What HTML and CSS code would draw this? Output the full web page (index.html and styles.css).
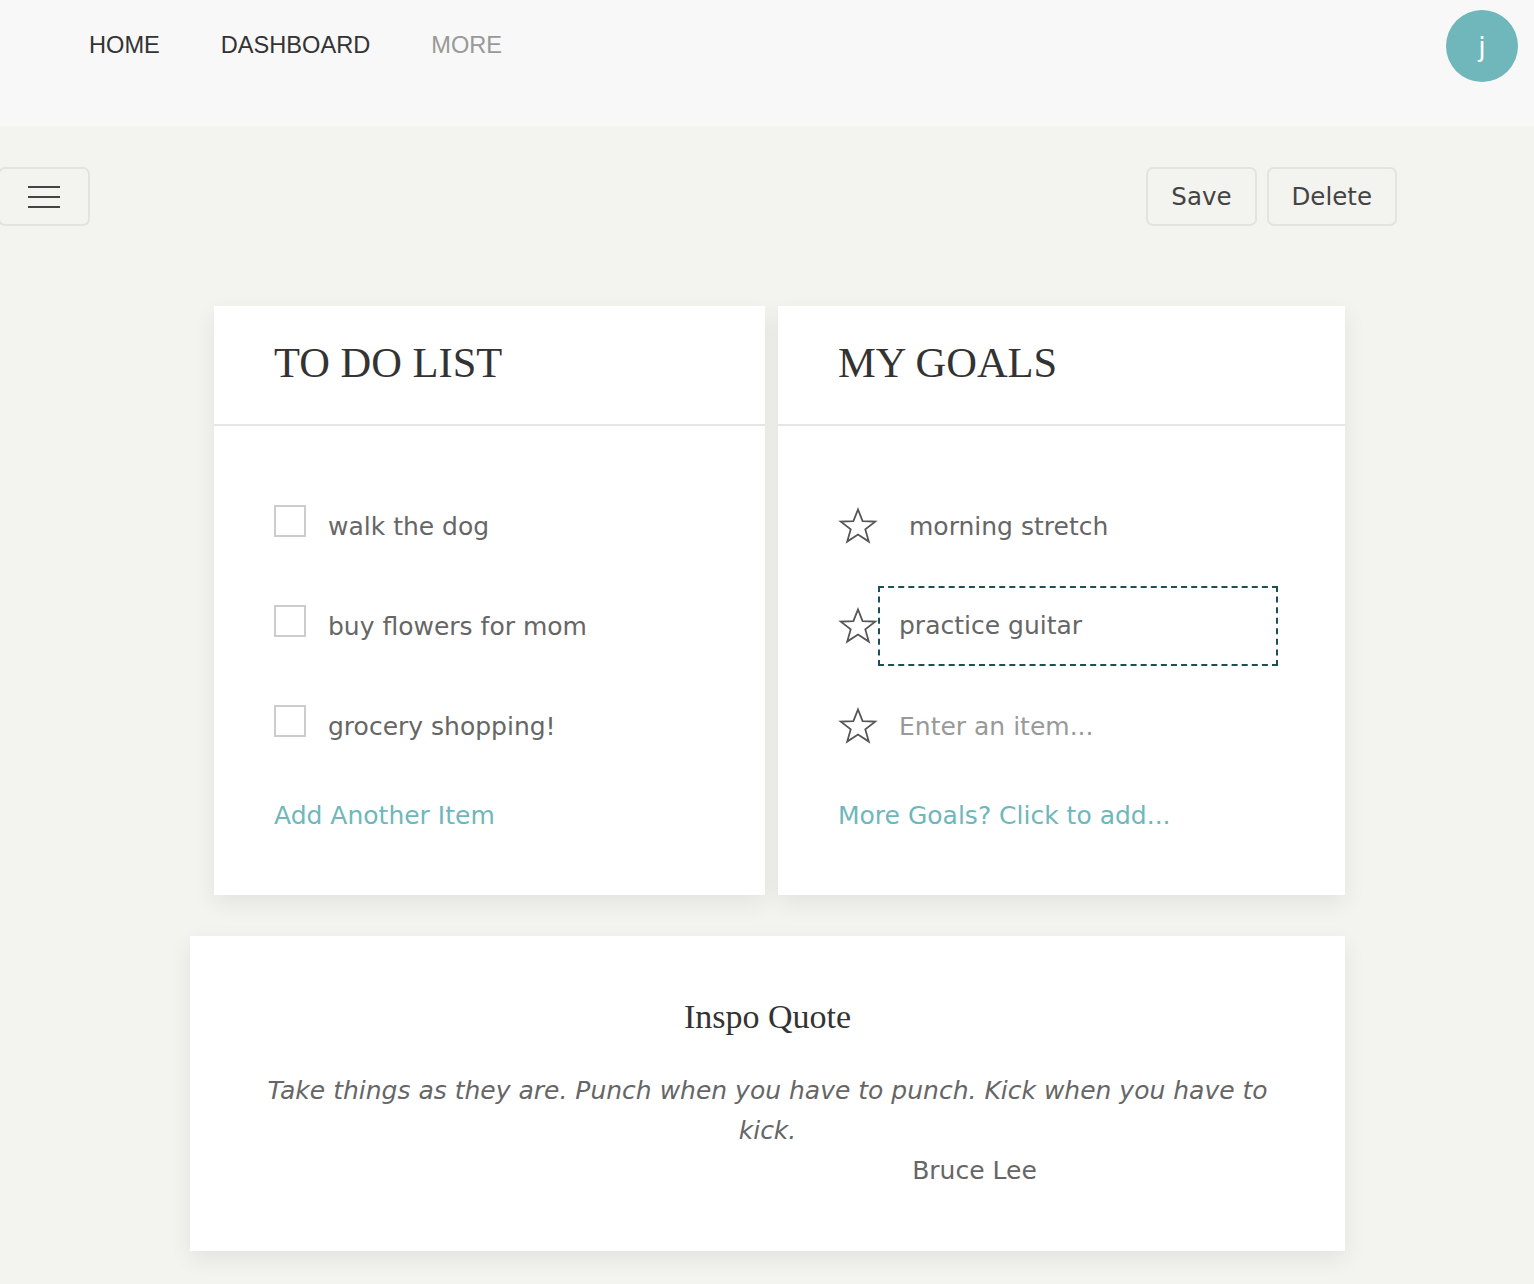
FILE: index.html
```html
<!DOCTYPE html>
<html lang="en">
<head>
<meta charset="utf-8">
<title>Dashboard</title>
<link rel="stylesheet" href="styles.css">
</head>
<body>
<header class="topbar">
  <nav class="nav">
    <a class="nav-link" href="#">HOME</a>
    <a class="nav-link" href="#">DASHBOARD</a>
    <a class="nav-link muted" href="#">MORE</a>
  </nav>
  <div class="avatar">j</div>
</header>

<div class="toolbar">
  <button class="menu-btn" aria-label="menu">
    <span class="bar"></span><span class="bar"></span><span class="bar"></span>
  </button>
  <div class="actions">
    <button class="btn">Save</button>
    <button class="btn">Delete</button>
  </div>
</div>

<main class="content">
  <div class="cards">
    <section class="card todo">
      <div class="card-head"><h2 class="card-title">TO DO LIST</h2></div>
      <div class="card-body">
        <div class="row"><span class="check"></span><span class="item">walk the dog</span></div>
        <div class="row"><span class="check"></span><span class="item">buy flowers for mom</span></div>
        <div class="row"><span class="check"></span><span class="item">grocery shopping!</span></div>
        <a class="add-link" href="#">Add Another Item</a>
      </div>
    </section>
    <section class="card goals">
      <div class="card-head"><h2 class="card-title">MY GOALS</h2></div>
      <div class="card-body">
        <div class="row">
          <svg class="star" viewBox="0 0 40 38"><path d="M20 2.5 L24.6 14.2 L37.2 14.6 L27.3 22.4 L30.8 34.6 L20 27.6 L9.2 34.6 L12.7 22.4 L2.8 14.6 L15.4 14.2 Z"/></svg>
          <span class="item goal-text">morning stretch</span>
        </div>
        <div class="row">
          <svg class="star" viewBox="0 0 40 38"><path d="M20 2.5 L24.6 14.2 L37.2 14.6 L27.3 22.4 L30.8 34.6 L20 27.6 L9.2 34.6 L12.7 22.4 L2.8 14.6 L15.4 14.2 Z"/></svg>
          <span class="goal-input">practice guitar</span>
        </div>
        <div class="row">
          <svg class="star" viewBox="0 0 40 38"><path d="M20 2.5 L24.6 14.2 L37.2 14.6 L27.3 22.4 L30.8 34.6 L20 27.6 L9.2 34.6 L12.7 22.4 L2.8 14.6 L15.4 14.2 Z"/></svg>
          <span class="placeholder">Enter an item...</span>
        </div>
        <a class="add-link" href="#">More Goals? Click to add...</a>
      </div>
    </section>
  </div>

  <section class="quote-card">
    <h3 class="quote-title">Inspo Quote</h3>
    <p class="quote-text">Take things as they are. Punch when you have to punch. Kick when you have to kick.</p>
    <p class="quote-author">Bruce Lee</p>
  </section>
</main>
</body>
</html>
```

FILE: styles.css
```css
* { box-sizing: border-box; }

html, body {
  margin: 0;
  padding: 0;
}

body {
  background: #f3f3ef;
  font-family: "DejaVu Sans", "Liberation Sans", sans-serif;
  color: #555;
  min-height: 1284px;
}

.topbar {
  height: 126px;
  background: #f8f8f8;
  display: flex;
  justify-content: space-between;
  align-items: flex-start;
  padding: 10px 16px 0 89px;
}

.nav {
  display: flex;
  gap: 61px;
  padding-top: 20px;
}

.nav-link {
  font-family: "Liberation Sans", Arial, sans-serif;
  font-size: 23.6px;
  line-height: 31px;
  color: #333;
  text-decoration: none;
}

.nav-link.muted { color: #999; }

.avatar {
  width: 72px;
  height: 72px;
  border-radius: 50%;
  background: #6fb7bb;
  color: #fff;
  font-size: 27px;
  display: flex;
  align-items: center;
  justify-content: center;
}

.toolbar {
  display: flex;
  justify-content: space-between;
  align-items: center;
  margin-top: 41px;
  padding-right: 137px;
}

.menu-btn {
  margin-left: -2px;
  width: 92px;
  height: 59px;
  border: 2px solid #e4e4df;
  border-radius: 7px;
  background: transparent;
  display: flex;
  flex-direction: column;
  align-items: flex-start;
  justify-content: center;
  gap: 8px;
  padding: 0 0 0 28px;
}

.bar {
  display: block;
  width: 32px;
  height: 2px;
  background: #444;
}

.actions {
  display: flex;
  gap: 10px;
}

.btn {
  height: 59px;
  border: 2px solid #e4e4df;
  border-radius: 7px;
  background: transparent;
  font-family: "DejaVu Sans", sans-serif;
  font-size: 24.5px;
  color: #444;
  padding: 0 23px;
}

.content {
  padding: 80px 189px 40px 190px;
}

.cards {
  display: flex;
  gap: 13px;
  padding-left: 24px;
}

.card {
  background: #fff;
  box-shadow: 0 8px 22px rgba(0, 0, 0, 0.07);
}

.todo { width: 551px; }
.goals { width: 567px; }

.card-head {
  height: 120px;
  border-bottom: 2px solid #e6e6e6;
  padding: 0 60px;
  display: flex;
  align-items: center;
}

.card-title {
  margin: 0;
  font-family: "Liberation Serif", "Times New Roman", serif;
  font-weight: normal;
  font-size: 42.5px;
  color: #333;
  padding-bottom: 6px;
}

.card-body {
  padding: 46px 60px 59px 60px;
}

.row {
  height: 100px;
  display: flex;
  align-items: center;
}

.check {
  width: 32px;
  height: 32px;
  border: 2px solid #ccc;
  margin-top: -2px;
  flex: none;
}

.item {
  font-size: 25px;
  color: #666;
  margin-left: 22px;
  margin-top: 8px;
}

.goal-text { margin-left: 31px; margin-top: 8px; }

.star {
  width: 40px;
  height: 38px;
  flex: none;
  margin-left: 0;
  margin-top: 8px;
  fill: none;
  stroke: #555;
  stroke-width: 1.8;
  stroke-linejoin: miter;
}

.goal-input {
  margin-left: 0;
  margin-top: 8px;
  width: 400px;
  height: 80px;
  border: 2px dashed #1f4f55;
  display: flex;
  align-items: center;
  padding-left: 19px;
  font-size: 25px;
  color: #666;
  padding-bottom: 2px;
}

.placeholder {
  font-size: 25px;
  color: #999;
  margin-left: 21px;
  margin-top: 8px;
}

.add-link {
  display: block;
  margin-top: 24px;
  line-height: 40px;
  font-size: 25px;
  color: #6fb7bb;
  text-decoration: none;
}

.quote-card {
  margin-top: 41px;
  background: #fff;
  box-shadow: 0 8px 22px rgba(0, 0, 0, 0.07);
  padding: 56px 60px 60px;
  text-align: center;
}

.quote-title {
  margin: 0;
  font-family: "Liberation Serif", "Times New Roman", serif;
  font-weight: normal;
  font-size: 34px;
  line-height: 50px;
  color: #333;
}

.quote-text {
  margin: 29px 0 0;
  font-style: italic;
  font-size: 25px;
  line-height: 40px;
  color: #666;
}

.quote-author {
  margin: 0;
  font-size: 25px;
  line-height: 40px;
  color: #666;
  padding-left: 414px;
}
```
